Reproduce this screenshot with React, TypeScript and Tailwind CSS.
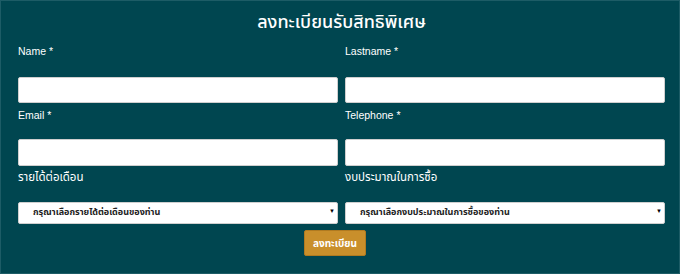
const thai = "font-['Liberation_Sans','Noto_Sans','Noto_Sans_Thai',sans-serif]";

function Field({ label, th }: { label: string; th?: boolean }) {
  return (
    <label className={`block h-4 leading-4 text-white ${th ? "text-[11.5px]" : "text-[10.5px]"} ${thai}`}>
      {label}
    </label>
  );
}

function Select({ text }: { text: string }) {
  return (
    <div className="relative flex h-[22px] items-center rounded-[2px] border border-[#cfcfcf] bg-white pl-[14px]">
      <span className={`text-[9px] font-bold text-[#222] ${thai}`}>{text}</span>
      <span className="absolute right-[2px] top-[5px] text-[6px] leading-none text-black">▼</span>
    </div>
  );
}

export default function App() {
  return (
    <div className="h-[274px] w-[680px] overflow-hidden border border-[#1d5c66] bg-[#004650] pl-[17px] pr-[14px]">
      <h1 className={`pt-[9px] text-center text-[18px] font-medium leading-6 text-white ${thai}`}>
        ลงทะเบียนรับสิทธิพิเศษ
      </h1>

      <div className="mt-[9px] grid grid-cols-2 gap-x-[7px]">
        <Field label="Name *" />
        <Field label="Lastname *" />
        <input className="mt-[18px] h-[26px] rounded-[2px] border border-[#cfcfcf] bg-white" />
        <input className="mt-[18px] h-[26px] rounded-[2px] border border-[#cfcfcf] bg-white" />

        <div className="mt-[4px]"><Field label="Email *" /></div>
        <div className="mt-[4px]"><Field label="Telephone *" /></div>
        <input className="mt-[16px] h-[27px] rounded-[2px] border border-[#cfcfcf] bg-white" />
        <input className="mt-[16px] h-[27px] rounded-[2px] border border-[#cfcfcf] bg-white" />

        <div className="mt-[3px]"><Field label="รายได้ต่อเดือน" th /></div>
        <div className="mt-[3px]"><Field label="งบประมาณในการซื้อ" th /></div>
        <div className="mt-[17px]"><Select text="กรุณาเลือกรายได้ต่อเดือนของท่าน" /></div>
        <div className="mt-[17px]"><Select text="กรุณาเลือกงบประมาณในการซื้อของท่าน" /></div>
      </div>

      <div className="mt-[6px] flex justify-center pr-[13px]">
        <button className={`h-[26px] w-[62px] rounded-[2px] border border-[#b07a20] bg-[#c98f2b] text-[10px] font-bold text-white ${thai}`}>
          ลงทะเบียน
        </button>
      </div>
    </div>
  );
}
